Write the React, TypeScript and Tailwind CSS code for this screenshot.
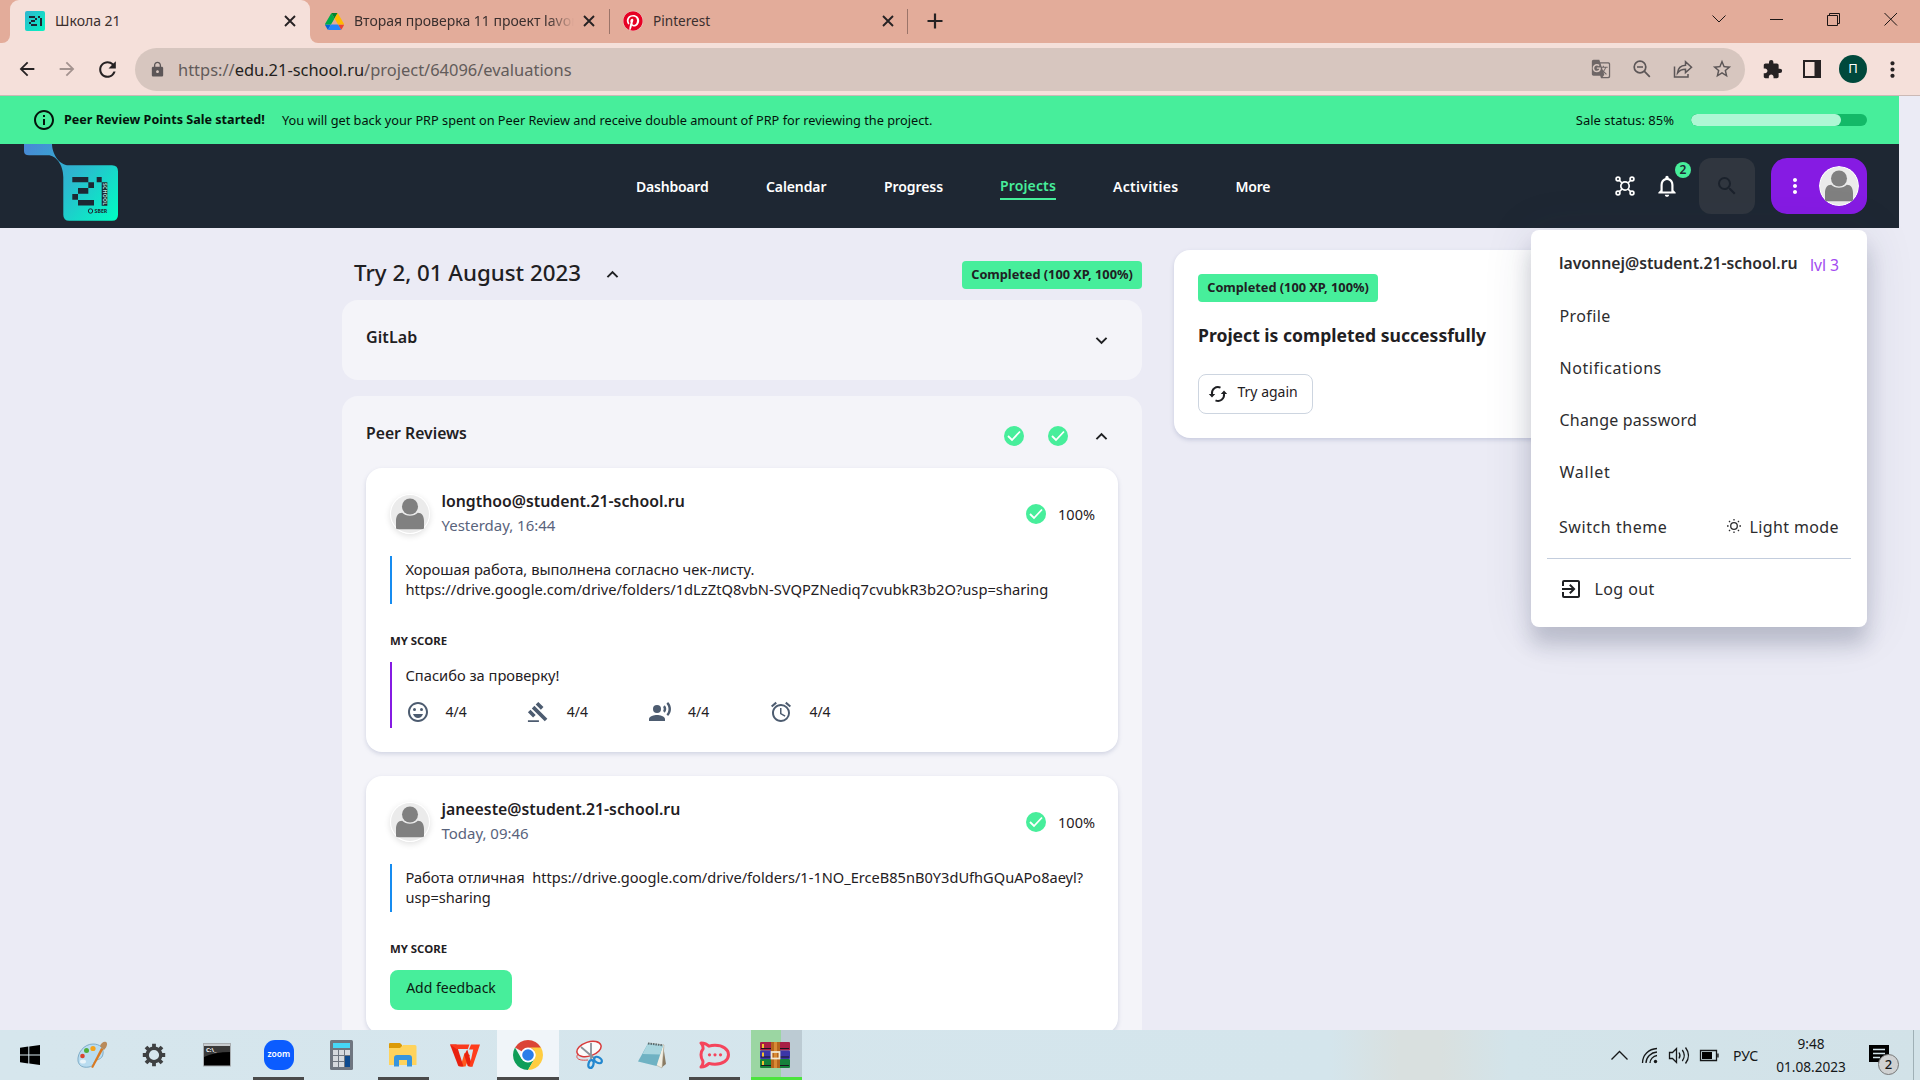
import type { ReactNode } from 'react';
import {
  MdAlarm,
  MdArrowBack,
  MdArrowForward,
  MdExitToApp,
  MdExtension,
  MdGTranslate,
  MdGavel,
  MdInfoOutline,
  MdKeyboardArrowDown,
  MdKeyboardArrowUp,
  MdLock,
  MdMoreVert,
  MdNotificationsNone,
  MdOutlineEmojiEmotions,
  MdRecordVoiceOver,
  MdRefresh,
  MdSearch,
  MdStarOutline,
} from 'react-icons/md';
import { FaPinterest } from 'react-icons/fa';

function CloseIcon() {
  return (
    <svg width="12" height="12" viewBox="0 0 12 12" className="shrink-0" stroke="#262223" strokeWidth="1.9">
      <path d="M1 1l10 10M11 1L1 11" />
    </svg>
  );
}

function SchoolFavicon() {
  return (
    <svg width="20" height="20" viewBox="0 0 20 20" className="shrink-0">
      <defs>
        <linearGradient id="fav" x1="0" y1="0" x2="1" y2="1">
          <stop offset="0" stopColor="#2fb5d0" />
          <stop offset="1" stopColor="#04f5c0" />
        </linearGradient>
      </defs>
      <rect width="20" height="20" rx="2" fill="url(#fav)" />
      <path d="M4 5h6v2H4zM10 7h2v2h-2zM6 9h4v2H6zM4 11h2v2H4zM6 13h6v2H6zM13 5h2v2h-2zM15 7h2v8h-2z" fill="#1d2733" />
    </svg>
  );
}

function DriveIcon() {
  return (
    <svg width="19" height="17" viewBox="0 0 87 78" className="shrink-0">
      <path d="M6.6 66.85l3.85 6.65c.8 1.4 1.95 2.5 3.3 3.3L27.5 53H0c0 1.55.4 3.1 1.2 4.5z" fill="#0066da" />
      <path d="M43.65 25L29.9 1.2c-1.35.8-2.5 1.9-3.3 3.3L1.2 48.5A9 9 0 000 53h27.5z" fill="#00ac47" />
      <path d="M73.55 76.8c1.35-.8 2.5-1.9 3.3-3.3l1.6-2.75L86.1 57.5c.8-1.4 1.2-2.95 1.2-4.5H59.8l5.85 11.5z" fill="#ea4335" />
      <path d="M43.65 25L57.4 1.2C56.05.4 54.5 0 52.9 0H34.4c-1.6 0-3.15.45-4.5 1.2z" fill="#00832d" />
      <path d="M59.8 53H27.5L13.75 76.8c1.35.8 2.9 1.2 4.5 1.2h50.8c1.6 0 3.15-.45 4.5-1.2z" fill="#2684fc" />
      <path d="M73.4 26.5L60.7 4.5c-.8-1.4-1.95-2.5-3.3-3.3L43.65 25 59.8 53h27.45c0-1.55-.4-3.1-1.2-4.5z" fill="#ffba00" />
    </svg>
  );
}

function TabStrip() {
  return (
    <div className="flex h-[43px] w-full shrink-0 items-stretch bg-[#e3ac9a] text-[#3a2f2e]">
      <div className="w-[10px] bg-[#f5e0da]">
        <div className="h-full rounded-br-[8px] bg-[#e3ac9a]" />
      </div>
      <div className="bg-[#e3ac9a]">
        <div className="flex h-full w-[300px] items-center rounded-t-[9px] bg-[#f5e0da] pr-[14px] pb-px pl-[15px]">
          <SchoolFavicon />
          <span className="-mt-px ml-[10px] flex-1 text-[14px] leading-5">Школа 21</span>
          <CloseIcon />
        </div>
      </div>
      <div className="w-[10px] bg-[#f5e0da]">
        <div className="h-full rounded-bl-[8px] bg-[#e3ac9a]" />
      </div>
      <div className="flex w-[289px] items-center pr-[14px] pb-px pl-[5px]">
        <DriveIcon />
        <span className="-mt-px mr-[9px] ml-[10px] w-[220px] overflow-hidden text-[14px] leading-5 whitespace-nowrap [mask-image:linear-gradient(to_right,black_88%,transparent)]">
          Вторая проверка 11 проект lavonnej
        </span>
        <CloseIcon />
      </div>
      <div className="my-[9px] w-px bg-[#9b7469]" />
      <div className="flex w-[297px] items-center pr-[13px] pb-px pl-[13px]">
        <span className="shrink-0 rounded-full bg-white">
          <FaPinterest size={20} color="#e60023" />
        </span>
        <span className="-mt-px ml-[10px] flex-1 text-[13.6px] leading-5">Pinterest</span>
        <CloseIcon />
      </div>
      <div className="my-[9px] w-px bg-[#9b7469]" />
      <div className="flex flex-1 items-center pb-px pl-[19px]">
        <svg width="16" height="16" viewBox="0 0 16 16" stroke="#262223" strokeWidth="2.2">
          <path d="M8 0.5v15M0.5 8h15" />
        </svg>
      </div>
      <div className="flex h-[37px] w-[229px] items-center text-black">
        <svg width="229" height="16" viewBox="0 0 229 16" fill="none" stroke="#1c1615" strokeWidth="1">
          <path d="M21.500 4.500l6.500 6.500 6.500-6.500" />
          <path d="M79 8.500h13" />
          <path d="M136.500 4.500h10v10h-10zM138.500 4.500v-2h10v10h-2" />
          <path d="M193.500 2l12.500 12.500M206 2l-12.500 12.500" />
        </svg>
      </div>
    </div>
  );
}

function Toolbar() {
  return (
    <div className="flex h-[53px] w-full shrink-0 items-center border-b border-[#cbb9b5] bg-[#f5e0da] text-[#262223]">
      <div className="flex w-[135px] items-center pl-4">
        <MdArrowBack size={22} />
        <MdArrowForward size={22} className="ml-[18px] text-[#a3938f]" />
        <MdRefresh size={25} className="ml-[17px]" />
      </div>
      <div className="flex h-[43px] w-[1610px] items-center rounded-full bg-[#d7c6bf] pr-[12px] pl-[14px] text-[#5c5657]">
        <MdLock size={17} className="mt-px" />
        <span className="mt-[2px] ml-[12px] flex-1 text-[16.46px] leading-6 text-[#625b5a]">
          https://<span className="text-[#231f20]">edu.21-school.ru</span>/project/64096/evaluations
        </span>
        <MdGTranslate size={20} className="opacity-85" />
        <svg width="18" height="18" viewBox="0 0 18 18" fill="none" stroke="currentColor" strokeWidth="1.7" className="ml-[22px]">
          <circle cx="7" cy="7" r="5.800" />
          <path d="M11.200 11.200l5.600 5.600M4 7h6" />
        </svg>
        <svg width="20" height="18" viewBox="0 0 20 18" fill="none" stroke="currentColor" strokeWidth="1.5" className="ml-[22px]">
          <path d="M1.500 6.500v10.500h13.500v-3" />
          <path d="M4.500 13c.5-5 3.500-7.500 8-7.700V1.800L18.500 7.300l-6 5.200V9.200C9 9.200 6.500 10.300 4.500 13z" />
        </svg>
        <MdStarOutline size={22} className="ml-[18px]" />
      </div>
      <div className="flex flex-1 items-center pl-[17px]">
        <MdExtension size={21} />
        <svg width="18" height="18" viewBox="0 0 18 18" className="ml-[20px]">
          <path d="M0 0h18v18H0zM2 2v14h9.500V2z" fill="#262223" fillRule="evenodd" />
        </svg>
        <span className="ml-[18px] flex h-7 w-7 items-center justify-center rounded-full bg-[#00493c] text-[13px] text-white">П</span>
        <MdMoreVert size={25} className="ml-[13px]" />
      </div>
    </div>
  );
}

function Avatar({ className = '' }: { className?: string }) {
  return (
    <svg width="40" height="40" viewBox="0 0 40 40" className={`shrink-0 rounded-full ${className}`}>
      <circle cx="20" cy="20" r="20" fill="#fff" />
      <circle cx="20" cy="20" r="19" fill="#ebebeb" />
      <ellipse cx="20" cy="12.500" rx="8" ry="8" fill="#808080" />
      <path d="M6 34v-7c0-5 2-8.300 6.200-8.300 2 2 4.600 3 7.800 3s5.800-1 7.800-3C32 18.700 34 22 34 27v7q0 1.300-1.300 1.300H7.300Q6 35.300 6 34z" fill="#808080" />
    </svg>
  );
}

function SaleBanner() {
  return (
    <div className="flex h-12 w-[1899px] items-center bg-[#47ee9b] pr-8 text-[#04140c]">
      <MdInfoOutline size={24} className="ml-8" />
      <b className="-mt-px ml-[8px] w-[218px] text-[12.6px] leading-4 whitespace-nowrap">Peer Review Points Sale started!</b>
      <span className="-mt-px flex-1 text-[12.74px] leading-4 whitespace-nowrap">
        You will get back your PRP spent on Peer Review and receive double amount of PRP for reviewing the project.
      </span>
      <span className="-mt-px mr-[17px] text-[13px] leading-4">Sale status: 85%</span>
      <div className="h-3 w-[176px] overflow-hidden rounded-full bg-[#13b968]">
        <div className="h-full w-[85%] rounded-full bg-[#aef7d4]" />
      </div>
    </div>
  );
}

function Logo() {
  return (
    <svg width="100" height="84" viewBox="0 0 100 84" className="shrink-0 self-start">
      <defs>
        <linearGradient id="logo" gradientUnits="userSpaceOnUse" x1="4" y1="0" x2="96" y2="76">
          <stop offset="0" stopColor="#4a86d6" />
          <stop offset="0.5" stopColor="#2bb9cf" />
          <stop offset="1" stopColor="#00fdc2" />
        </linearGradient>
      </defs>
      <path
        d="M4 0H32C32 8 38 21.300 49 21.300H92Q98 21.300 98 27.300V70.700Q98 76.700 92 76.700H49.300Q43.300 76.700 43.300 70.700V33C43.300 21 36 11.300 28 11.300H9Q4 11.300 4 7z"
        fill="url(#logo)"
      />
      <path
        d="M52.300 33h16v5.300h-16zM68.300 38.300h5.700V44h-5.700zM58 44h10.300v5.700H58zM52.300 50H58v5.700h-5.700zM58 56h16v5.500H58zM76.700 33h5v5.300h-5zM81.700 38.300h5.600v23.400h-5.600z"
        fill="#1d2733"
      />
      <text x="39" y="-82.700" transform="rotate(90)" fill="#a9e6df" fontSize="5" fontWeight="700" textLength="22">
        SCHOOL
      </text>
      <circle cx="70.500" cy="67" r="2.200" fill="none" stroke="#1d2733" strokeWidth="1" />
      <text x="74.500" y="69" fill="#1d2733" fontSize="5.500" fontWeight="700" textLength="12.800" lengthAdjust="spacingAndGlyphs">
        SBER
      </text>
    </svg>
  );
}

function NetworkIcon() {
  return (
    <svg width="20" height="20" viewBox="0 0 20 20" fill="none" stroke="#fff" strokeWidth="1.7">
      <circle cx="10" cy="10" r="4.200" />
      <circle cx="3" cy="3" r="1.900" />
      <circle cx="17" cy="3" r="1.900" />
      <circle cx="3" cy="17" r="1.900" />
      <circle cx="17" cy="17" r="1.900" />
      <path d="M4.500 4.500l2.500 2.500M15.500 4.500L13 7M4.500 15.500L7 13M15.500 15.500L13 13" />
    </svg>
  );
}

function SiteNav() {
  return (
    <nav className="flex h-[84px] w-[1899px] items-center bg-[#1e2733] pr-8 pl-5 text-[14px] leading-5 font-semibold text-white">
      <Logo />
      <div className="mt-[2px] ml-[516px] flex flex-1 items-center gap-[57px]">
        <span className="w-[73px] tracking-[-0.22px]">Dashboard</span>
        <span className="w-[61px] tracking-[-0.1px]">Calendar</span>
        <span className="w-[59px] tracking-[-0.08px]">Progress</span>
        <span className="h-[26px] w-[56px] border-b-2 border-[#47ee9b] pt-[2px] tracking-[0.14px] text-[#47ee9b]">Projects</span>
        <span className="w-[65.5px] tracking-[0.3px]">Activities</span>
        <span className="tracking-[-0.2px]">More</span>
      </div>
      <NetworkIcon />
      <div className="relative ml-[18px] flex h-7 w-7 items-center justify-center">
        <MdNotificationsNone size={26} />
        <span className="absolute -top-[10px] left-[22px] flex h-4 w-4 items-center justify-center rounded-full bg-[#47ee9b] text-[12px] leading-4 font-semibold text-[#1e2733]">
          2
        </span>
      </div>
      <div className="ml-[18px] flex h-14 w-14 items-center justify-center rounded-[12px] bg-[#30363f]">
        <MdSearch size={24} color="#1b222c" />
      </div>
      <div className="ml-4 flex h-14 w-24 items-center rounded-2xl bg-[#861be3] pl-3">
        <MdMoreVert size={24} />
        <Avatar className="ml-3" />
      </div>
    </nav>
  );
}

function Check() {
  return (
    <span className="flex h-5 w-5 shrink-0 items-center justify-center rounded-full bg-[#47ee9b]">
      <svg width="14" height="12" viewBox="0 0 14 12" fill="none" stroke="#fff" strokeWidth="1.8">
        <path d="M1 6l4 4L13 1.500" />
      </svg>
    </span>
  );
}

function CompletedPill() {
  return (
    <span className="flex h-7 w-[180px] items-center justify-center rounded-[4px] bg-[#47ee9b] pb-[2px] text-[12.75px] leading-4 font-bold whitespace-nowrap text-[#1f2023]">
      Completed (100 XP, 100%)
    </span>
  );
}

type ReviewProps = { name: string; time: string; quote: string; quoteClass: string; children: ReactNode };

function ReviewCard({ name, time, quote, quoteClass, children }: ReviewProps) {
  return (
    <article className="w-[752px] rounded-2xl bg-white px-6 pt-6 pb-6 shadow-[0_2px_4px_rgba(120,130,170,0.28)]">
      <header className="flex h-10 items-start">
        <Avatar className="mt-[2px] shadow-[0_2px_6px_rgba(0,0,0,0.12)]" />
        <div className="ml-[11.5px] flex-1">
          <div className="-mt-[2px] text-[15.83px] leading-[22px] font-semibold">{name}</div>
          <div className="mt-[3px] text-[14.97px] leading-5 text-[#59637c]">{time}</div>
        </div>
        <div className="mt-3 flex items-center">
          <Check />
          <span className="-mt-px -mr-px ml-3 text-[14.5px] leading-5">100%</span>
        </div>
      </header>
      <blockquote className={`mt-6 h-12 border-l-2 border-[#168cf0] pt-[3px] pl-[13.500px] leading-5 whitespace-pre ${quoteClass}`}>
        {quote}
      </blockquote>
      <h4 className="mt-[29px] mb-[13px] text-[11.4px] leading-4 font-bold">MY SCORE</h4>
      {children}
    </article>
  );
}

function Score({ icon }: { icon: ReactNode }) {
  return (
    <div className="flex w-[121.300px] items-center">
      {icon}
      <span className="ml-4 text-[14px] leading-5 text-[#1f2023]">4/4</span>
    </div>
  );
}

function TryAgainIcon() {
  return (
    <svg width="20" height="20" viewBox="0 0 20 20" fill="none" stroke="#1f2023" strokeWidth="2">
      <path d="M4 11.500V10a6 6 0 018.500-6.300M16 8.500V10a6 6 0 01-8.500 6.300" />
      <path d="M0.800 10h6.400L4 13.600zM12.800 10h6.400L16 6.400z" fill="#1f2023" stroke="none" />
    </svg>
  );
}

function MenuPanel() {
  return (
    <div className="absolute top-[230px] left-[1531px] flex h-[397px] w-[336px] flex-col rounded-lg bg-white px-4 pt-5 text-[16px] text-[#2c2c2e] shadow-[0_18px_20px_rgba(40,50,80,0.2),0_4px_50px_rgba(40,50,80,0.12)]">
      <div className="flex h-7 items-center pr-3 pl-3">
        <span className="flex-1 text-[15.8px] font-semibold">lavonnej@student.21-school.ru</span>
        <span className="mt-1 text-[15.7px] text-[#a34bf0]">lvl 3</span>
      </div>
      <div className="mt-[14px] flex h-[208px] flex-col pl-[12.500px]">
        <span className="h-[52px] leading-[48px] tracking-[0.37px]">Profile</span>
        <span className="h-[52px] leading-[48px] tracking-[0.55px]">Notifications</span>
        <span className="h-[52px] leading-[48px] tracking-[0.2px]">Change password</span>
        <span className="h-[52px] leading-[48px] tracking-[0.75px]">Wallet</span>
      </div>
      <div className="flex h-[59px] items-center border-b border-[#c3cddd] pr-3 pl-3">
        <span className="-mt-[5px] flex-1 tracking-[0.56px]">Switch theme</span>
        <svg width="16" height="16" viewBox="0 0 16 16" fill="none" stroke="#2c2c2e" strokeWidth="1.300" className="-mt-[6px]">
          <circle cx="8" cy="8" r="3.300" />
          <path d="M8 1v1.600M8 13.400V15M1 8h1.600M13.400 8H15M3 3l1.100 1.100M11.900 11.900L13 13M3 13l1.100-1.100M11.900 4.100L13 3" />
        </svg>
        <span className="-mt-[5px] ml-2 tracking-[0.38px]">Light mode</span>
      </div>
      <div className="mt-[18px] flex h-6 items-center pl-3">
        <MdExitToApp size={24} color="#1f2023" />
        <span className="ml-[11.500px] tracking-[0.4px]">Log out</span>
      </div>
    </div>
  );
}

function MainContent() {
  return (
    <main className="flex min-h-0 flex-1 items-start pl-[342px] text-[#1f2023]">
      <section className="w-[800px] pt-[30px]">
        <div className="flex h-[42px] items-start pl-3">
          <h1 className="text-[22.3px] leading-[30px] font-medium">Try 2, 01 August 2023</h1>
          <MdKeyboardArrowUp size={23} className="mt-[5px] ml-[20px]" />
          <div className="mt-[3px] ml-auto">
            <CompletedPill />
          </div>
        </div>
        <div className="flex h-20 items-start rounded-2xl bg-[#f4f4f9] px-6 pt-6">
          <h2 className="flex-1 pt-px text-[16px] leading-6 font-semibold tracking-[0.1px]">GitLab</h2>
          <MdKeyboardArrowDown size={23} className="mt-[4.500px] mr-[5px]" />
        </div>
        <div className="mt-4 h-[700px] rounded-t-2xl bg-[#f4f4f9] px-6">
          <div className="flex h-[72px] items-center">
            <h2 className="mt-[2px] flex-1 text-[15.75px] leading-6 font-semibold">Peer Reviews</h2>
            <div className="mt-2 flex items-center">
              <Check />
              <span className="w-6" />
              <Check />
              <MdKeyboardArrowUp size={23} className="mr-[5px] ml-[22px]" />
            </div>
          </div>
          <div className="flex flex-col gap-6">
            <ReviewCard
              name="longthoo@student.21-school.ru"
              time="Yesterday, 16:44"
              quoteClass="text-[14.71px]"
              quote={'Хорошая работа, выполнена согласно чек-листу.\nhttps://drive.google.com/drive/folders/1dLzZtQ8vbN-SVQPZNediq7cvubkR3b2O?usp=sharing'}
            >
              <div className="h-[66px] border-l-2 border-[#861be3] pt-[3px] pl-[13.500px] text-[14.65px] leading-5">
                Спасибо за проверку!
                <div className="mt-[15px] flex text-[#4d5c70]">
                  <Score icon={<MdOutlineEmojiEmotions size={24} />} />
                  <Score icon={<MdGavel size={22} className="mr-[2px]" />} />
                  <Score icon={<MdRecordVoiceOver size={24} />} />
                  <Score icon={<MdAlarm size={24} />} />
                </div>
              </div>
            </ReviewCard>
            <ReviewCard
              name="janeeste@student.21-school.ru"
              time="Today, 09:46"
              quoteClass="text-[14.6px]"
              quote={'Работа отличная  https://drive.google.com/drive/folders/1-1NO_ErceB85nB0Y3dUfhGQuAPo8aeyl?\nusp=sharing'}
            >
              <button className="flex h-10 w-[122px] justify-center rounded-lg bg-[#47ee9b] pt-2 text-[14px] leading-5 text-[#0b1a12]">
                Add feedback
              </button>
            </ReviewCard>
          </div>
        </div>
      </section>
      <aside className="mt-[22px] ml-8 h-[188px] w-[384px] rounded-2xl bg-white px-6 pt-6 shadow-[0_2px_4px_rgba(120,130,170,0.3)]">
        <CompletedPill />
        <h2 className="mt-[21px] text-[17.57px] leading-6 font-bold">Project is completed successfully</h2>
        <button className="mt-[27px] flex h-10 w-[115px] items-center rounded-lg border border-[#cdd5e0] pl-[9px] text-[14px] leading-5">
          <TryAgainIcon />
          <span className="-mt-[4px] ml-[9.500px]">Try again</span>
        </button>
      </aside>
    </main>
  );
}

function PaintIcon() {
  return (
    <svg width="32" height="30" viewBox="0 0 32 30">
      <path d="M2 21C1 13 8 4 17 4c7 0 11 4 10 10s-6 5-8 7-1 5-6 6C7 28 3 26 2 21z" fill="#b9dcf0" stroke="#6f9fbd" strokeWidth="0.8" />
      <ellipse cx="7" cy="21.500" rx="3" ry="2" fill="#e9f4fa" />
      <circle cx="6.500" cy="16" r="2.300" fill="#d9442f" />
      <circle cx="10.500" cy="10.500" r="2.500" fill="#4fae3b" />
      <circle cx="17" cy="8.500" r="2.600" fill="#f4a31c" />
      <path d="M25 8l2.500 1L17 28l-1.800-.8z" fill="#d97a22" />
      <path d="M24 6c1-3 4-5 6-4s1 5-2 8z" fill="#b98a5a" />
    </svg>
  );
}

function GearIcon() {
  return (
    <svg width="24" height="24" viewBox="0 0 24 24">
      <circle cx="12" cy="12" r="6.800" fill="none" stroke="#3f4142" strokeWidth="3.400" />
      <g stroke="#3f4142" strokeWidth="3.800">
        <path d="M12 0.800v4M12 19.200v4M0.800 12h4M19.200 12h4M4 4l2.900 2.900M17.100 17.100l2.900 2.900M4 20l2.900-2.900M17.100 6.900L20 4" />
      </g>
    </svg>
  );
}

function TerminalIcon() {
  return (
    <svg width="28" height="24" viewBox="0 0 28 24">
      <rect x="0.500" y="0.500" width="27" height="22.500" fill="#000" stroke="#a8adb0" />
      <rect x="1" y="1" width="26" height="2" fill="#c8cccf" />
      <path d="M1 3h26v6Q12 9 1 14z" fill="#3a3a3a" />
      <text x="3" y="9" fontSize="6" fontWeight="700" fill="#fff">
        C:\_
      </text>
    </svg>
  );
}

function ZoomIcon() {
  return (
    <div className="flex h-[30px] w-[30px] items-center justify-center rounded-[11px] bg-[#0b5cff] text-[8.500px] leading-none font-semibold text-white">
      <span className="-mt-[2px]">zoom</span>
    </div>
  );
}

function CalculatorIcon() {
  return (
    <svg width="23" height="30" viewBox="0 0 23 30">
      <rect width="23" height="30" rx="1.500" fill="#6f7680" />
      <rect x="3" y="3" width="17" height="5" fill="#46d7f7" />
      <path d="M3 10h5v5H3zM9 10h5v5H9zM15 10h5v5h-5zM3 16h5v5H3zM9 16h5v5H9zM3 22h5v5H3zM9 22h5v5H9z" fill="#d6dade" />
      <path d="M15 16h5v11h-5z" fill="#0d4a8f" />
    </svg>
  );
}

function ExplorerIcon() {
  return (
    <svg width="28" height="24" viewBox="0 0 28 24">
      <path d="M0 1q0-1 1-1h10l2 2v3H0z" fill="#dc9a06" />
      <path d="M0 5h11l3-3h12q1.500 0 1.500 1.500V22H0z" fill="#ffd35c" />
      <path d="M5 23.500V15q0-3 3-3h12q3 0 3 3v8.500h-5V17h-8v6.500z" fill="#3795de" />
    </svg>
  );
}

function WpsIcon() {
  return (
    <svg width="30" height="23" viewBox="0 0 30 23">
      <path d="M14.500 9l-4 13.500h5L20 11z" fill="#ff5a1f" />
      <path d="M0 0.500h6.500l7 22H10q-1.500 0-2-1.200z" fill="#e8210f" />
      <path d="M0 0.500h19.500L17.800 5H6.500z" fill="#fb3a1e" />
      <path d="M17.200 5.500L22.500 22.500h-3q-1.500 0-2-1.200L14.200 11z" fill="#e8210f" />
      <path d="M19.500 22.500h3L30 0.500h-9l-2 5h4.200z" fill="#ff3d1c" />
    </svg>
  );
}

function ChromeIcon() {
  return (
    <svg width="30" height="30" viewBox="0 0 30 30">
      <path d="M15 15L2.010 7.500A15 15 0 0127.990 7.500z" fill="#db4437" />
      <path d="M2.010 7.500A15 15 0 0015 30l6.500-11.250L15 15 8.500 18.750z" fill="#0f9d58" />
      <path d="M27.990 7.500A15 15 0 0115 30l6.500-11.250A7.500 7.500 0 0015 7.500z" fill="#ffcd40" />
      <circle cx="15" cy="15" r="7.500" fill="#fff" />
      <circle cx="15" cy="15" r="5.800" fill="#2b7de9" />
    </svg>
  );
}

function SnipIcon() {
  return (
    <svg width="30" height="30" viewBox="0 0 30 30" fill="none">
      <ellipse cx="14" cy="9" rx="12.500" ry="7" transform="rotate(-18 14 9)" fill="#fbfbfb" stroke="#d83a3a" strokeWidth="1.500" />
      <path d="M3 14c-3 4 0 7 10 6" stroke="#e04b4b" strokeWidth="1" />
      <path d="M6 7l14 12M16 3l0 16" stroke="#8a9199" strokeWidth="1.800" />
      <ellipse cx="16" cy="24" rx="2.500" ry="4" stroke="#2287cf" strokeWidth="2.200" transform="rotate(15 16 24)" />
      <ellipse cx="23" cy="20" rx="4.200" ry="2.700" stroke="#2287cf" strokeWidth="2.200" transform="rotate(30 23 20)" />
    </svg>
  );
}

function NotepadIcon() {
  return (
    <svg width="30" height="27" viewBox="0 0 30 27">
      <path d="M26 3l3 19-5 4z" fill="#8a7b63" />
      <path d="M11 1l16 2-2 23-6-3z" fill="#f2efe3" stroke="#aaa38f" strokeWidth="0.500" />
      <path d="M11 1.500l15 2-6.500 20.500L1 19.500z" fill="#6fb2c3" />
      <path d="M11 1.500l15 2-3 9L5.500 12z" fill="#a9d6df" />
      <path d="M11 1.500l15 1.800" stroke="#5a6a70" strokeWidth="2" strokeDasharray="1.500 1" />
    </svg>
  );
}

function RocketChatIcon() {
  return (
    <svg width="31" height="28" viewBox="0 0 31 28" fill="none">
      <path
        d="M2 2c3 .2 6 1.200 8 3.200 1.800-.6 3.800-.9 6-.9 8 0 13.500 4.200 13.500 9.500S24 23.300 16 23.300c-2.200 0-4.200-.3-6-.9C8 24.500 5 26 2 26c1.800-2 2.300-4 1.800-6.200C2.500 18 2 16 2 13.800S2.500 9.600 4 8C4.300 6 3.800 4 2 2z"
        stroke="#f5455c"
        strokeWidth="3"
        strokeLinejoin="round"
      />
      <circle cx="10.500" cy="13.800" r="1.600" fill="#f5455c" />
      <circle cx="16" cy="13.800" r="1.600" fill="#f5455c" />
      <circle cx="21.500" cy="13.800" r="1.600" fill="#f5455c" />
    </svg>
  );
}

function WinrarIcon() {
  return (
    <svg width="30" height="26" viewBox="0 0 30 26">
      <rect y="0" width="30" height="8.500" rx="1" fill="#a81f45" />
      <rect y="8.500" width="30" height="8.500" rx="1" fill="#3b36a8" />
      <rect y="17" width="30" height="9" rx="1" fill="#16803a" />
      <path d="M1 6.500h28M1 15h28M1 23.500h28" stroke="#1b1420" strokeWidth="1.200" />
      <path d="M2 2h2v4H2zM2 10.500h2v4H2zM2 19h2v4H2z" fill="#f2c230" />
      <rect x="11" width="9" height="26" fill="#b5651d" />
      <rect x="14" width="3" height="26" fill="#d98a35" />
      <rect x="11.500" y="10" width="8" height="6.500" fill="none" stroke="#f0e6d0" strokeWidth="1.800" />
    </svg>
  );
}

function TaskCell({ children, bar = false, active = false }: { children: ReactNode; bar?: boolean; active?: boolean }) {
  return (
    <div className={`flex h-[50px] w-[62.200px] shrink-0 flex-col items-center ${active ? 'bg-[#f0f5f9]' : ''}`}>
      <div className="flex h-[47px] items-center pt-[3px]">{children}</div>
      {bar && <div className={`h-[3px] bg-[#4a4a4a] ${active ? 'w-full' : 'w-[51px]'}`} />}
    </div>
  );
}

function Taskbar() {
  return (
    <footer className="flex h-[50px] w-full shrink-0 items-stretch bg-[linear-gradient(to_right,#d6e6ed_0,#d4e5ec_1330px,#d9e0df_1400px,#d9e0df_1440px,#d3e4ea_1510px,#d2e2e8_1920px)] text-[#161819]">
      <div className="-ml-[1px] flex">
        <TaskCell>
          <svg width="20" height="20" viewBox="0 0 20 20">
            <path d="M0 2.800L8.300 1.600V9.500H0zM9.300 1.400L20 0v9.500H9.300zM0 10.500h8.300v7.900L0 17.200zM9.300 10.500H20V20L9.300 18.600z" />
          </svg>
        </TaskCell>
        <TaskCell><PaintIcon /></TaskCell>
        <TaskCell><GearIcon /></TaskCell>
        <TaskCell><TerminalIcon /></TaskCell>
        <TaskCell bar><ZoomIcon /></TaskCell>
        <TaskCell><CalculatorIcon /></TaskCell>
        <TaskCell bar><ExplorerIcon /></TaskCell>
        <TaskCell><WpsIcon /></TaskCell>
        <TaskCell bar active><ChromeIcon /></TaskCell>
        <TaskCell><SnipIcon /></TaskCell>
        <TaskCell><NotepadIcon /></TaskCell>
        <TaskCell bar><RocketChatIcon /></TaskCell>
      </div>
      <div className="ml-[5.600px] flex h-[50px] w-[51px] flex-col items-center border-b-[3px] border-[#4be43c] bg-[linear-gradient(to_right,#9bd6a2_59%,#bccbd3_59%)] pt-3 pr-[2px]">
        <WinrarIcon />
      </div>
      <div className="flex-1" />
      <svg width="112" height="50" viewBox="0 0 112 50" fill="none" stroke="#161819" strokeWidth="1.300">
        <path d="M0.500 29.500l8-8 8 8" />
        <path d="M31.500 33c0-8 6-14 14.500-14.500M35 33c0-6 5-10.500 11-11M39 33c0-3.500 3-7 7-7.500" />
        <circle cx="44.500" cy="31.500" r="1.700" fill="#161819" stroke="none" />
        <path d="M58.500 22.500h3l4-4v14l-4-4h-3zM68 22.500q2 3 0 6M71.300 20q4 5.500 0 11M74.500 17.500q6 8 0 16" />
        <path d="M89.500 20.500h16v10h-16zM107 23.500v4" />
        <path d="M91 22h10v7H91z" fill="#000" stroke="none" />
      </svg>
      <span className="ml-[10px] w-[26px] self-center pt-[1px] text-[14px] leading-5">РУС</span>
      <div className="ml-[12px] flex w-[80px] flex-col items-center pt-[2px] text-[13.65px] leading-[23px]">
        <span>9:48</span>
        <span>01.08.2023</span>
      </div>
      <div className="relative ml-[18px] w-[45px] border-r border-[#9fb0b6]">
        <svg width="20" height="22" viewBox="0 0 20 22" className="mt-[15px]">
          <path d="M0 0h20v17h-7v4l-4-4H0z" fill="#000" />
          <path d="M4 4.500h12M4 8.500h12M4 12.500h7" stroke="#d3e4ea" strokeWidth="1.500" />
        </svg>
        <span className="absolute top-[24px] left-[9px] flex h-[21px] w-[21px] items-center justify-center rounded-full border border-[#777] bg-[#cfd1d2] text-[13px] leading-none font-medium">
          2
        </span>
      </div>
      <div className="w-[6px]" />
    </footer>
  );
}

export default function App() {
  return (
    <div className="relative flex h-[1080px] w-[1920px] flex-col overflow-hidden bg-[#ebebf5] font-['Noto_Sans',sans-serif]">
      <TabStrip />
      <Toolbar />
      <div className="flex min-h-0 flex-1 flex-col overflow-hidden">
        <SaleBanner />
        <SiteNav />
        <MainContent />
      </div>
      <Taskbar />
      <MenuPanel />
    </div>
  );
}
